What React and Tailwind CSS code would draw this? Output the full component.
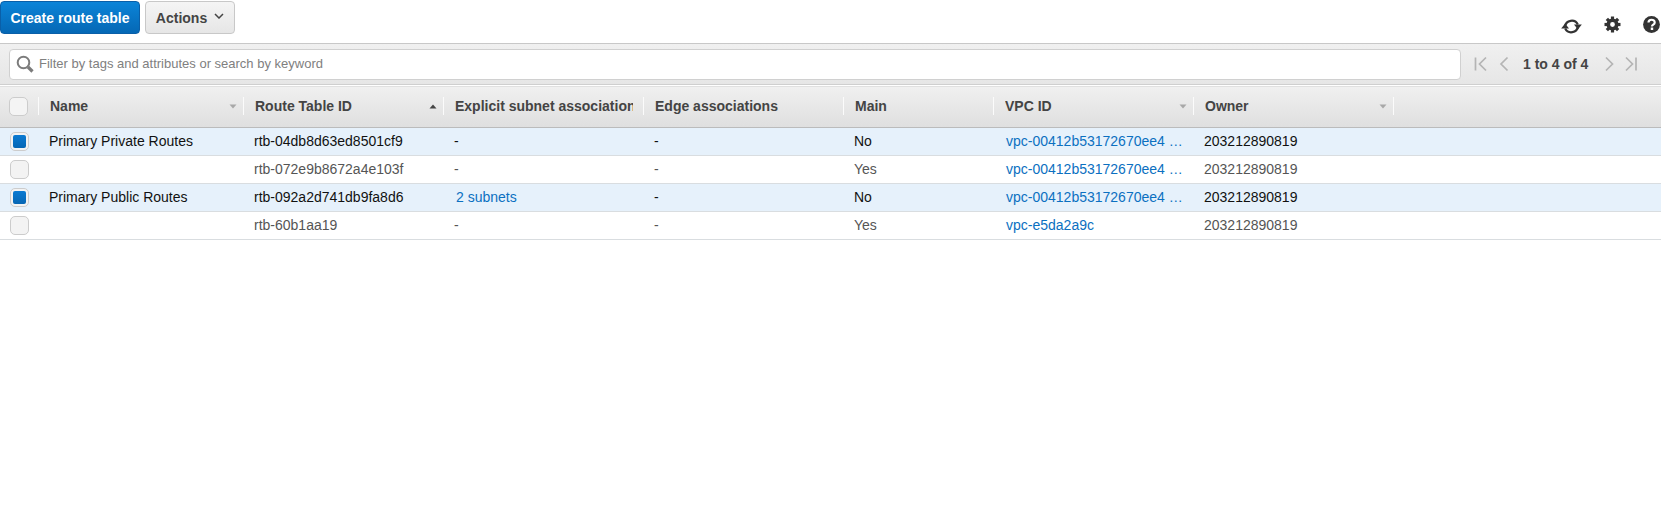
const columns = 'grid grid-cols-[39px_205px_200px_200px_200px_150px_200px_200px_1fr]'

const rows = [
  { name: 'Primary Private Routes', id: 'rtb-04db8d63ed8501cf9', subnets: '-', main: 'No', vpc: 'vpc-00412b53172670ee4 …', selected: true },
  { name: '', id: 'rtb-072e9b8672a4e103f', subnets: '-', main: 'Yes', vpc: 'vpc-00412b53172670ee4 …', selected: false },
  { name: 'Primary Public Routes', id: 'rtb-092a2d741db9fa8d6', subnets: '2 subnets', main: 'No', vpc: 'vpc-00412b53172670ee4 …', selected: true },
  { name: '', id: 'rtb-60b1aa19', subnets: '-', main: 'Yes', vpc: 'vpc-e5da2a9c', selected: false },
]

const gearTeeth = [0, 45, 90, 135, 180, 225, 270, 315]

function Caret({ up }) {
  return (
    <svg width="8" height="5" viewBox="0 0 8 5" className="absolute right-[6px] top-[7px]">
      <path d={up ? 'M0.5 4.5 L4 0.5 L7.5 4.5 Z' : 'M0.5 0.5 L4 4.5 L7.5 0.5 Z'} fill={up ? '#444' : '#a8a8a8'} />
    </svg>
  )
}

function HeaderCell({ label, sort }) {
  return (
    <div className="relative h-[18px] mt-[10px] border-r border-[#fbfbfb] pl-[11px] text-sm font-bold text-[#444] leading-[18px] whitespace-nowrap">
      <div className="overflow-hidden w-[178px]">{label}</div>
      {sort && <Caret up={sort === 'up'} />}
    </div>
  )
}

function Checkbox({ checked }) {
  return (
    <div className="w-[19px] h-[19px] rounded-[5px] border border-[#ccc] bg-[#f3f3f3] flex items-center justify-center">
      {checked && <div className="w-[13px] h-[13px] rounded-[2px] bg-gradient-to-b from-[#0a7ad2] to-[#0666b4]" />}
    </div>
  )
}

function Row({ row }) {
  const tone = row.selected ? 'bg-[#e6f1fb] text-[#111]' : 'bg-white text-[#555]'
  return (
    <div className={`${columns} h-[28px] border-b border-[#d9dde0] text-sm leading-[27px] whitespace-nowrap ${tone}`}>
      <div className="pl-[10px] pt-[4px]"><Checkbox checked={row.selected} /></div>
      <div className="pl-[10px]">{row.name}</div>
      <div className="pl-[10px]">{row.id}</div>
      <div className="pl-[10px]">
        {row.subnets === '-' ? '-' : <span className="pl-[2px] text-[#0b70c1]">{row.subnets}</span>}
      </div>
      <div className="pl-[10px]">-</div>
      <div className="pl-[10px]">{row.main}</div>
      <div className="pl-[12px] text-[#0b70c1]">{row.vpc}</div>
      <div className="pl-[10px]">203212890819</div>
      <div />
    </div>
  )
}

function PagerIcon({ d }) {
  return (
    <svg width="13" height="16" viewBox="0 0 13 16" fill="none" stroke="#b4b4b4" strokeWidth="1.7">
      <path d={d} />
    </svg>
  )
}

function Gear() {
  return (
    <svg width="17" height="17" viewBox="0 0 17 17" fill="none" stroke="#333">
      <circle cx="8.5" cy="8.5" r="4.2" strokeWidth="3.6" />
      {gearTeeth.map(a => (
        <path key={a} d="M8.5 0.5 V3.5" strokeWidth="3.2" transform={`rotate(${a} 8.5 8.5)`} />
      ))}
    </svg>
  )
}

export default function App() {
  return (
    <div className="w-[1674px] h-[521px] bg-white font-['Liberation_Sans',Arial,sans-serif] overflow-hidden">
      <div className="w-[1661px]">
        <div className="h-[43px] flex items-start pt-px">
          <button className="h-[33px] w-[140px] rounded-[4px] border border-[#0a5fa8] bg-gradient-to-b from-[#0c84d8] to-[#0568b5] text-white text-sm font-bold">
            Create route table
          </button>
          <button className="h-[33px] w-[90px] ml-[5px] rounded-[4px] border border-[#c8c8c8] bg-gradient-to-b from-[#f5f5f5] to-[#e6e6e6] text-[#444] text-sm font-bold flex items-center justify-center gap-[7px]">
            Actions
            <svg width="10" height="6" viewBox="0 0 10 6" fill="none" stroke="#444" strokeWidth="1.5" className="mt-[-3px]"><path d="M1 1 L5 5 L9 1" /></svg>
          </button>
          <div className="ml-auto flex items-start gap-[22px] pt-[15px] pr-px">
            <svg width="21" height="17" viewBox="0 0 21 17" fill="none" stroke="#333" strokeWidth="2.2" className="mt-[2px]">
              <path d="M4 8.5 A6.8 6.8 0 0 1 16.8 6.5" />
              <path d="M17 8.5 A6.8 6.8 0 0 1 4.2 10.5" />
              <path d="M13 6.5 L20.8 6.5 L16.9 11.5 Z" fill="#333" stroke="none" />
              <path d="M0.2 10.5 L8 10.5 L4.1 5.5 Z" fill="#333" stroke="none" />
            </svg>
            <Gear />
            <svg width="17" height="17" viewBox="0 0 18 18">
              <circle cx="9" cy="9" r="8.9" fill="#333" />
              <path d="M5.8 7 C5.8 2.9 12.4 3 12.4 6.8 C12.4 9.2 9.5 9 9.5 11" fill="none" stroke="#fff" strokeWidth="2.3" />
              <rect x="8.2" y="12.2" width="2.6" height="2.6" fill="#fff" />
            </svg>
          </div>
        </div>
        <div className="h-[42px] border-t border-[#c8c8c8] bg-gradient-to-b from-[#f0f0f0] to-[#e6e6e6] border-b border-b-[#cfcfcf] flex items-center pl-[9px]">
          <div className="w-[1452px] h-[31px] rounded-[4px] border border-[#d0d0d0] bg-white flex items-center pl-[6px]">
            <svg width="18" height="18" viewBox="0 0 18 18" fill="none" stroke="#7c7c7c" strokeWidth="2" className="shrink-0">
              <circle cx="7.5" cy="7.5" r="5.8" />
              <path d="M12 12 L16.5 16.5" strokeWidth="3.2" />
            </svg>
            <span className="ml-[5px] text-[13px] text-[#808080]">Filter by tags and attributes or search by keyword</span>
          </div>
          <div className="ml-[13px] flex items-center">
            <PagerIcon d="M1.5 1.5 V14.5 M12 1.5 L5.5 8 L12 14.5" />
            <span className="w-[11px]" />
            <PagerIcon d="M9.5 1.5 L3 8 L9.5 14.5" />
            <span className="ml-[12px] text-sm font-bold text-[#444]">1 to 4 of 4</span>
            <span className="w-[15px]" />
            <PagerIcon d="M3 1.5 L9.5 8 L3 14.5" />
            <span className="w-[9px]" />
            <PagerIcon d="M1 1.5 L7.5 8 L1 14.5 M11 1.5 V14.5" />
          </div>
        </div>
        <div className={`${columns} mt-px h-[42px] bg-gradient-to-b from-[#f0f0f0] to-[#dfdfdf] border-t border-[#e0e0e0] border-b border-b-[#bbb]`}>
          <div className="h-[18px] mt-[10px] border-r border-[#fbfbfb] relative">
            <div className="absolute left-[9px] top-0 w-[19px] h-[19px] rounded-[5px] border border-[#ccc] bg-[#f4f4f4]" />
          </div>
          <HeaderCell label="Name" sort="down" />
          <HeaderCell label="Route Table ID" sort="up" />
          <HeaderCell label="Explicit subnet associations" />
          <HeaderCell label="Edge associations" />
          <HeaderCell label="Main" />
          <HeaderCell label="VPC ID" sort="down" />
          <HeaderCell label="Owner" sort="down" />
          <div />
        </div>
        {rows.map(row => <Row key={row.id} row={row} />)}
      </div>
    </div>
  )
}
